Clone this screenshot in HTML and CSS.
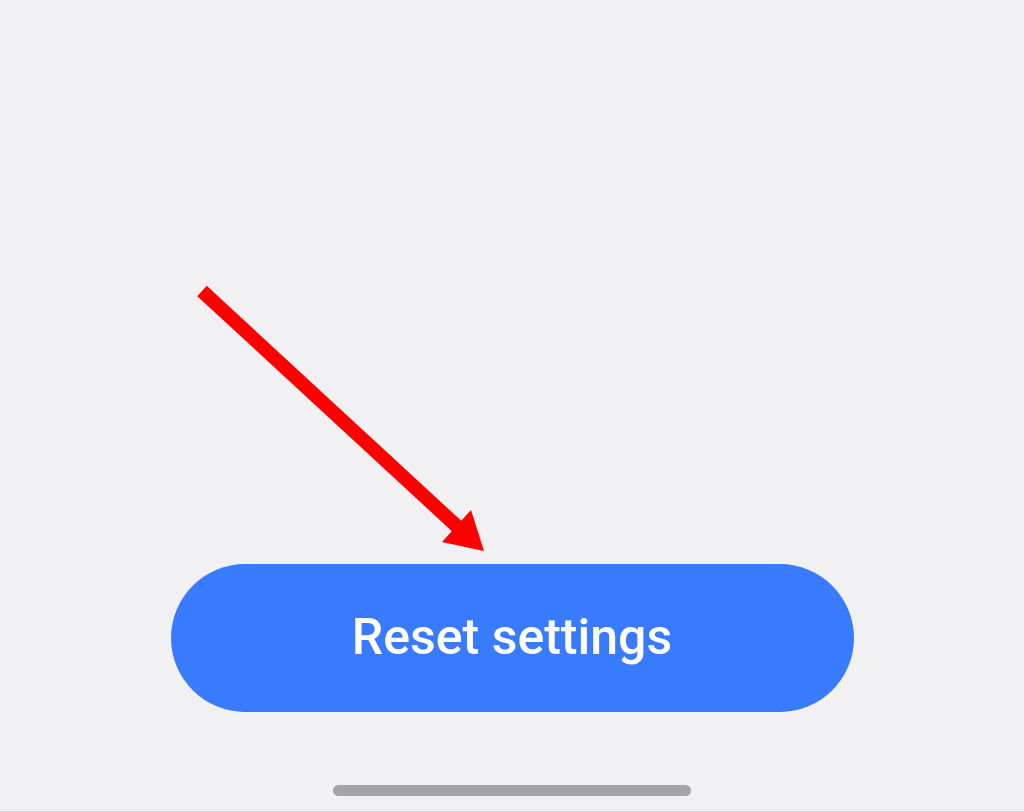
FILE: index.html
```html
<!DOCTYPE html>
<html>
<head>
<meta charset="utf-8">
<link rel="stylesheet" href="styles.css">
</head>
<body>
<div class="screen">
  <div class="spacer"></div>
  <button class="reset-btn">Reset settings</button>
  <div class="home-bar"></div>
  <svg class="annotation" width="1024" height="812" viewBox="0 0 1024 812">
    <line x1="202" y1="291" x2="462" y2="531" stroke="#ff0000" stroke-width="14"/>
    <polygon points="484,551 471,510 442,542" fill="#ff0000"/>
  </svg>
</div>
</body>
</html>
```
FILE: styles.css
```css
html, body {
  margin: 0;
  padding: 0;
  background: #f1f1f3;
}
.screen {
  position: relative;
  width: 1024px;
  height: 812px;
  box-sizing: border-box;
  display: flex;
  flex-direction: column;
  align-items: center;
  border-bottom: 1px solid #d6d6d8;
  background: #f1f1f3;
  overflow: hidden;
}
.spacer {
  flex: 1;
}
.reset-btn {
  width: 683px;
  height: 148px;
  margin-left: 0;
  border: none;
  border-radius: 74px;
  background: #387bff;
  color: #ffffff;
  font-family: Roboto, "Open Sans", sans-serif;
  font-weight: 500;
  font-size: 50px;
  letter-spacing: 0;
  padding: 0;
  padding-bottom: 2px;
}
.home-bar {
  width: 358px;
  height: 11px;
  border-radius: 6px;
  background: #a4a4a6;
  margin-top: 73px;
  margin-bottom: 15px;
}
.annotation {
  position: absolute;
  left: 0;
  top: 0;
  pointer-events: none;
}
```
